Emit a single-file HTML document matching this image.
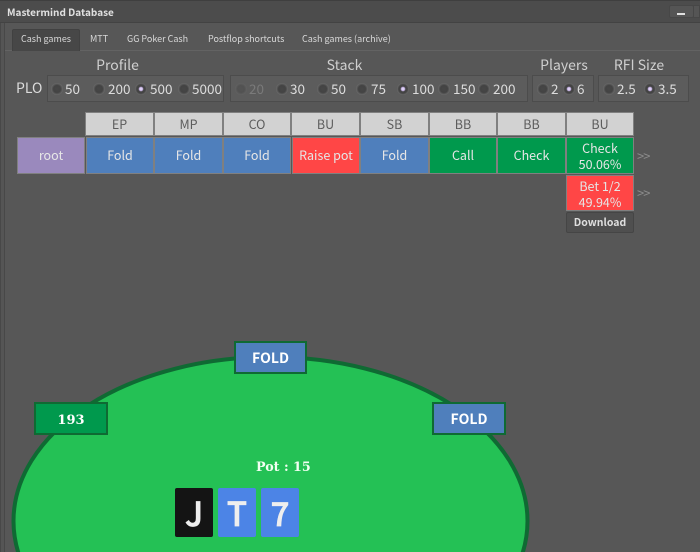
<!DOCTYPE html>
<html><head><meta charset="utf-8">
<style>
html,body{margin:0;padding:0;background:#575757;overflow:hidden}
#p{position:relative;width:700px;height:552px;overflow:hidden;background:#575757;font-family:"Noto Sans CJK JP","Liberation Sans",sans-serif;color:#dcdcdc}
#p div{position:absolute;box-sizing:border-box}
.t{white-space:nowrap;line-height:16px}
.tab{font-size:9px;color:#d8d8d8;top:31px}
.h{font-size:14px;color:#cfcfcf;top:57px;text-align:center}
.g{top:75px;height:27px;background:#5c5c5c;border:1px solid #4c4c4c}
.r{width:12px;height:12px;top:83px;border-radius:50%;background:radial-gradient(circle closest-side,#474747 0,#434343 60%,#6a6a6a 100%)}
.r.on{background:radial-gradient(circle closest-side,#efe6ff 0,#c9b6e8 28%,#434343 45%,#434343 70%,#6a6a6a 100%)}
.r.off{opacity:.4}
.l{font-size:13.500px;color:#dcdcdc;top:80px;white-space:nowrap;line-height:16px}
.l.off{color:#7a7a7a}
.c{text-align:center;border:1px solid #808080;font-size:12.500px;color:#e6e6e6}
.hd{top:112px;height:24px;background:#d2d2d2;color:#5c5c5c;line-height:22px}
.rw{top:137px;height:37px;line-height:34px}
.b{background:#4f7fbc}.gr{background:#00994d}.rd{background:#ff4646}
.two{line-height:16px;padding-top:2px}
.ar{color:#8e8e8e;font-size:13px;left:637px;line-height:12px;letter-spacing:-1px;white-space:nowrap}
.seat{height:33px;border:2px solid #0f6a33;text-align:center;color:#fff;font-weight:bold;font-size:14px;line-height:31px}
.card{top:488px;width:38px;height:49px;border-radius:2px;text-align:center;color:#eee;font-weight:500;font-size:33px;line-height:49px;-webkit-text-stroke:.7px #eee}
</style></head>
<body><div id="p">
<div style="left:0;top:0;width:700px;height:23px;background:#4c4c4c;border-top:1px solid #3f3f3f;border-bottom:1px solid #434343"></div>
<div style="left:0;top:23px;width:5px;height:529px;background:#555;border-left:1px solid #484848;border-right:1px solid #484848"></div>
<div class="t" style="left:7px;top:4px;font-size:10px;font-weight:bold;color:#e0e0e0">Mastermind Database</div>
<div style="left:669px;top:5px;width:25px;height:13px;background:#555;border:1px solid #474747;border-radius:2px"></div>
<div style="left:677px;top:13px;width:8px;height:2px;background:#e0e0e0"></div>
<div style="left:693px;top:5px;width:7px;height:13px;background:#555;border:1px solid #474747"></div>

<div style="left:5px;top:50px;width:695px;height:1px;background:#636363"></div>
<div style="left:12px;top:29px;width:68px;height:22px;background:#474747;border:1px solid #414141;border-bottom:0;border-radius:2px 2px 0 0"></div>
<div class="t tab" style="left:21px">Cash games</div>
<div class="t tab" style="left:90px">MTT</div>
<div class="t tab" style="left:127px">GG Poker Cash</div>
<div class="t tab" style="left:208px">Postflop shortcuts</div>
<div class="t tab" style="left:302px">Cash games (archive)</div>

<div class="t h" style="left:47px;width:141px">Profile</div>
<div class="t h" style="left:230px;width:229px">Stack</div>
<div class="t h" style="left:532px;width:64px">Players</div>
<div class="t h" style="left:598px;width:82px">RFI Size</div>
<div class="t" style="left:16px;top:80px;font-size:14px;color:#dcdcdc">PLO</div>

<div class="g" style="left:47px;width:177px"></div>
<div class="g" style="left:230px;width:298px"></div>
<div class="g" style="left:532px;width:62px"></div>
<div class="g" style="left:598px;width:91px"></div>

<div class="r" style="left:51px"></div><div class="l" style="left:65px">50</div>
<div class="r" style="left:93px"></div><div class="l" style="left:108px">200</div>
<div class="r on" style="left:135px"></div><div class="l" style="left:150px">500</div>
<div class="r" style="left:178px"></div><div class="l" style="left:192px">5000</div>

<div class="r off" style="left:235px"></div><div class="l off" style="left:249px">20</div>
<div class="r" style="left:276px"></div><div class="l" style="left:290px">30</div>
<div class="r" style="left:317px"></div><div class="l" style="left:331px">50</div>
<div class="r" style="left:356px"></div><div class="l" style="left:371px">75</div>
<div class="r on" style="left:397px"></div><div class="l" style="left:412px">100</div>
<div class="r" style="left:438px"></div><div class="l" style="left:453px">150</div>
<div class="r" style="left:478px"></div><div class="l" style="left:493px">200</div>

<div class="r" style="left:537px"></div><div class="l" style="left:551px">2</div>
<div class="r on" style="left:563px"></div><div class="l" style="left:577px">6</div>

<div class="r" style="left:603px"></div><div class="l" style="left:617px">2.5</div>
<div class="r on" style="left:644px"></div><div class="l" style="left:658px">3.5</div>

<div class="c hd" style="left:85px;width:69px">EP</div>
<div class="c hd" style="left:154px;width:69px">MP</div>
<div class="c hd" style="left:223px;width:68px">CO</div>
<div class="c hd" style="left:291px;width:69px">BU</div>
<div class="c hd" style="left:360px;width:69px">SB</div>
<div class="c hd" style="left:429px;width:68px">BB</div>
<div class="c hd" style="left:497px;width:69px">BB</div>
<div class="c hd" style="left:566px;width:68px">BU</div>

<div class="c rw" style="left:17px;width:68px;background:#9a89bd">root</div>
<div class="c rw b" style="left:86px;width:68px">Fold</div>
<div class="c rw b" style="left:154px;width:69px">Fold</div>
<div class="c rw b" style="left:223px;width:68px">Fold</div>
<div class="c rw rd" style="left:292px;width:68px">Raise pot</div>
<div class="c rw b" style="left:360px;width:69px">Fold</div>
<div class="c rw gr" style="left:429px;width:68px">Call</div>
<div class="c rw gr" style="left:497px;width:69px">Check</div>
<div class="c rw gr two" style="left:566px;width:68px">Check<br>50.06%</div>
<div class="c rw rd two" style="left:566px;top:175px;height:36px;width:68px">Bet 1/2<br>49.94%</div>
<div class="ar" style="top:150px">&gt;&gt;</div>
<div class="ar" style="top:187px">&gt;&gt;</div>
<div style="left:566px;top:212px;width:68px;height:21px;background:#4f4f4f;border:1px solid #454545;border-radius:2px;text-align:center;font-size:10.500px;font-weight:bold;color:#dedede;line-height:19px">Download</div>

<svg style="position:absolute;left:0;top:0" width="700" height="552"><ellipse cx="270.500" cy="521" rx="257" ry="164" fill="#24c155" stroke="#0f6a33" stroke-width="4"/></svg>

<div class="seat" style="left:234px;top:341px;width:73px;background:#4f7fbc">FOLD</div>
<div class="seat" style="left:34px;top:402px;width:74px;background:#00994d;font-family:'DejaVu Serif',serif;font-size:13px;line-height:33px">193</div>
<div class="seat" style="left:432px;top:402px;width:74px;background:#4f7fbc">FOLD</div>
<div class="t" style="left:256px;top:459px;font-family:'DejaVu Serif',serif;font-weight:bold;font-size:12.700px;color:#f2fff2">Pot : 15</div>
<div class="card" style="left:175px;background:#141414">J</div>
<div class="card" style="left:218px;background:#4c84e6">T</div>
<div class="card" style="left:261px;background:#4c84e6">7</div>
</div></body></html>
